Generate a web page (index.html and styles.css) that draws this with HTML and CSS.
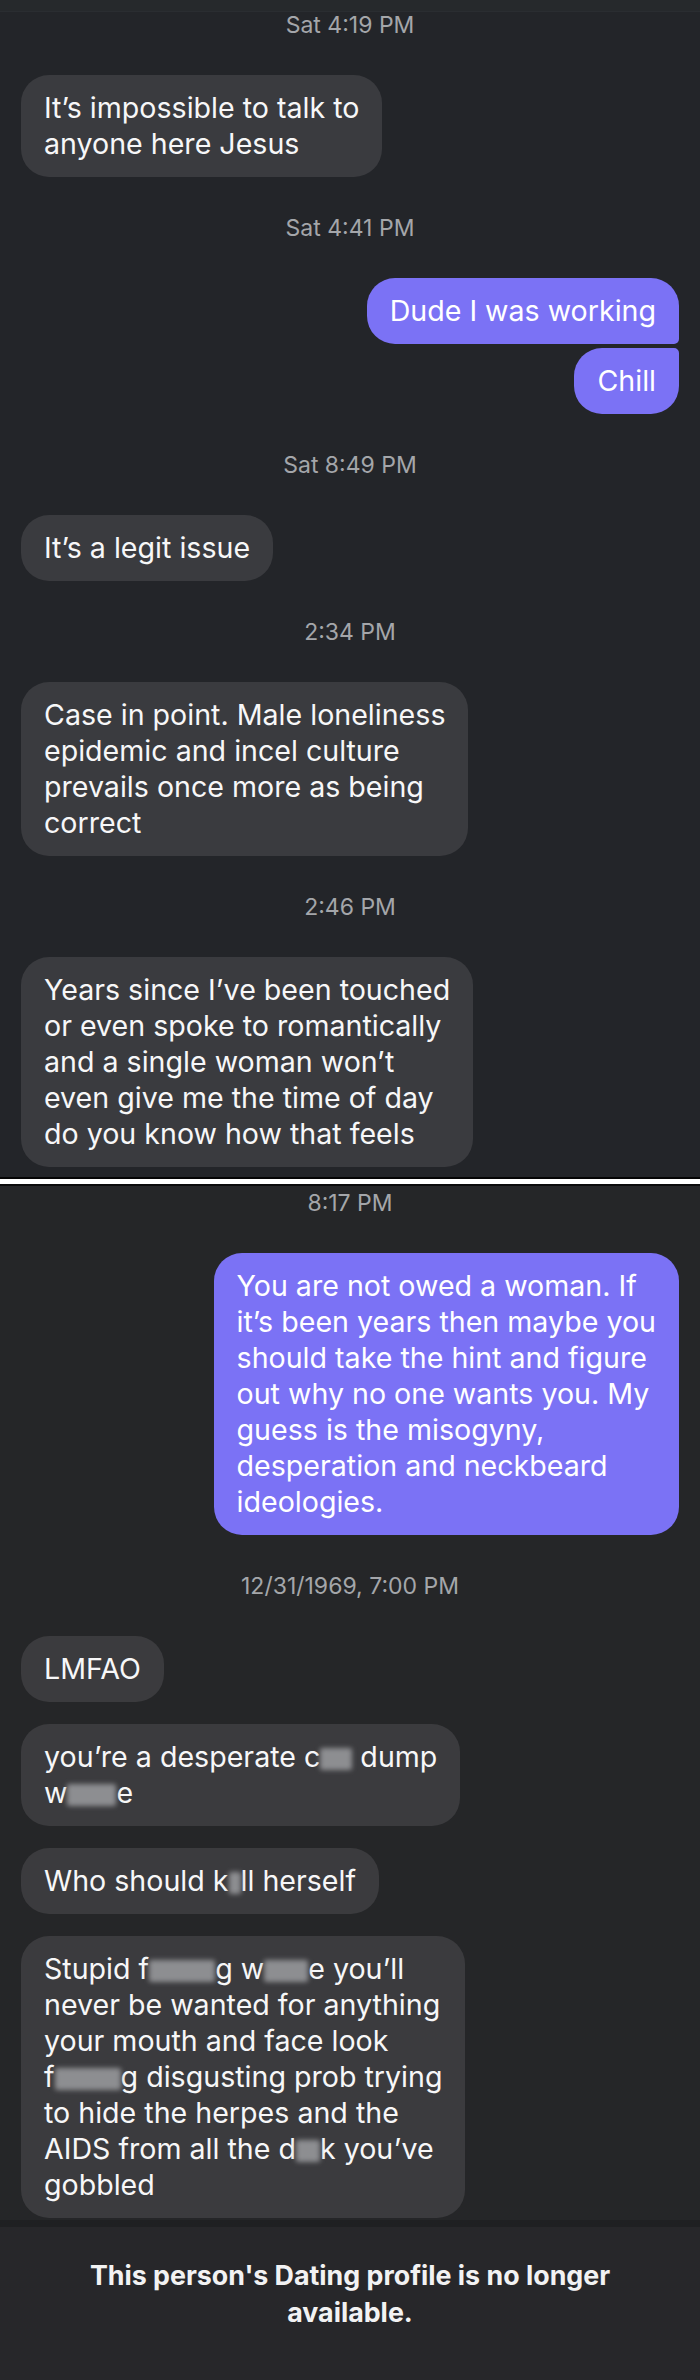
FILE: index.html
```html
<!DOCTYPE html>
<html lang="en">
<head>
<meta charset="utf-8">
<title>Chat</title>
<link rel="stylesheet" href="styles.css">
</head>
<body>
<div class="chat">
  <div class="topbar"></div>
  <section class="thread upper">
    <p class="stamp first">Sat 4:19 PM</p>
    <div class="row in"><div class="bubble">It’s impossible to talk to<br>anyone here Jesus</div></div>

    <p class="stamp">Sat 4:41 PM</p>
    <div class="row out"><div class="bubble out-top">Dude I was working</div></div>
    <div class="row out tight"><div class="bubble out-bottom">Chill</div></div>

    <p class="stamp">Sat 8:49 PM</p>
    <div class="row in"><div class="bubble">It’s a legit issue</div></div>

    <p class="stamp">2:34 PM</p>
    <div class="row in"><div class="bubble">Case in point. Male loneliness<br>epidemic and incel culture<br>prevails once more as being<br>correct</div></div>

    <p class="stamp">2:46 PM</p>
    <div class="row in"><div class="bubble">Years since I’ve been touched<br>or even spoke to romantically<br>and a single woman won’t<br>even give me the time of day<br>do you know how that feels</div></div>
  </section>

  <div class="divider"></div>

  <section class="thread lower">
    <p class="stamp first">8:17 PM</p>
    <div class="row out"><div class="bubble">You are not owed a woman. If<br>it’s been years then maybe you<br>should take the hint and figure<br>out why no one wants you. My<br>guess is the misogyny,<br>desperation and neckbeard<br>ideologies.</div></div>

    <p class="stamp">12/31/1969, 7:00 PM</p>
    <div class="row in"><div class="bubble">LMFAO</div></div>
    <div class="row in"><div class="bubble">you’re a desperate c<span class="redact r-a"></span> dump<br>w<span class="redact r-b"></span>e</div></div>
    <div class="row in"><div class="bubble">Who should k<span class="redact r-c"></span>ll herself</div></div>
    <div class="row in"><div class="bubble">Stupid f<span class="redact r-d"></span>g w<span class="redact r-e"></span>e you’ll<br>never be wanted for anything<br>your mouth and face look<br>f<span class="redact r-d"></span>g disgusting prob trying<br>to hide the herpes and the<br>AIDS from all the d<span class="redact r-f"></span>k you’ve<br>gobbled</div></div>
  </section>

  <footer class="notice">
    <p>This person's Dating profile is no longer<br>available.</p>
  </footer>
</div>
</body>
</html>
```

FILE: styles.css
```css
html, body {
  margin: 0;
  padding: 0;
}

body {
  background: #232529;
  font-family: Inter, "Noto Sans", "Liberation Sans", sans-serif;
  width: 700px;
  height: 2380px;
  overflow: hidden;
}

.chat {
  display: flex;
  flex-direction: column;
  min-height: 2380px;
}

.topbar {
  height: 12px;
  background: #26292c;
  border-bottom: 1px solid #2a2d31;
  box-sizing: border-box;
}

.thread {
  display: flex;
  flex-direction: column;
}

.thread.upper {
  background: #232529;
  padding-bottom: 10px;
}

.thread.lower {
  background: #252628;
  padding-bottom: 2px;
}

.stamp {
  margin: 0;
  padding: 39px 0 38px;
  text-align: center;
  font-size: 23px;
  line-height: 24px;
  color: #a4a6aa;
}

.stamp.first {
  padding-top: 1px;
}

.thread.lower .stamp.first {
  padding-top: 5px;
}

.row {
  display: flex;
  padding: 0 21px;
}

.row + .row {
  margin-top: 22px;
}

.row.tight {
  margin-top: 4px;
}

.row.in {
  justify-content: flex-start;
}

.row.out {
  justify-content: flex-end;
}

.bubble {
  font-size: 28.6px;
  line-height: 36px;
  padding: 15px 23px;
  border-radius: 28px;
  white-space: nowrap;
  color: #f7f7f8;
  background: #3a3b3f;
}

.thread.lower .bubble {
  background: #3b3b3e;
}

.row.out .bubble,
.thread.lower .row.out .bubble {
  background: #7b72f5;
  color: #ffffff;
}

.bubble.out-top {
  border-bottom-right-radius: 5px;
}

.bubble.out-bottom {
  border-top-right-radius: 5px;
}

.redact {
  display: inline-block;
  height: 22px;
  vertical-align: -3px;
  background: #8d8e91;
  filter: blur(2.5px);
  border-radius: 2px;
}

.r-a { width: 32px; }
.r-b { width: 49px; }
.r-c { width: 12px; }
.r-d { width: 66px; }
.r-e { width: 44px; }
.r-f { width: 24px; }

.divider {
  height: 5px;
  background: #ffffff;
  border-top: 2px solid #050505;
  border-bottom: 2px solid #0b0b0c;
}

.notice {
  flex: 1;
  background: #27272a;
  border-top: 7px solid #1f2022;
  padding-top: 30px;
  text-align: center;
}

.notice p {
  margin: 0;
  font-size: 26.8px;
  line-height: 37px;
  font-weight: 700;
  color: #f2f2f3;
}
```
